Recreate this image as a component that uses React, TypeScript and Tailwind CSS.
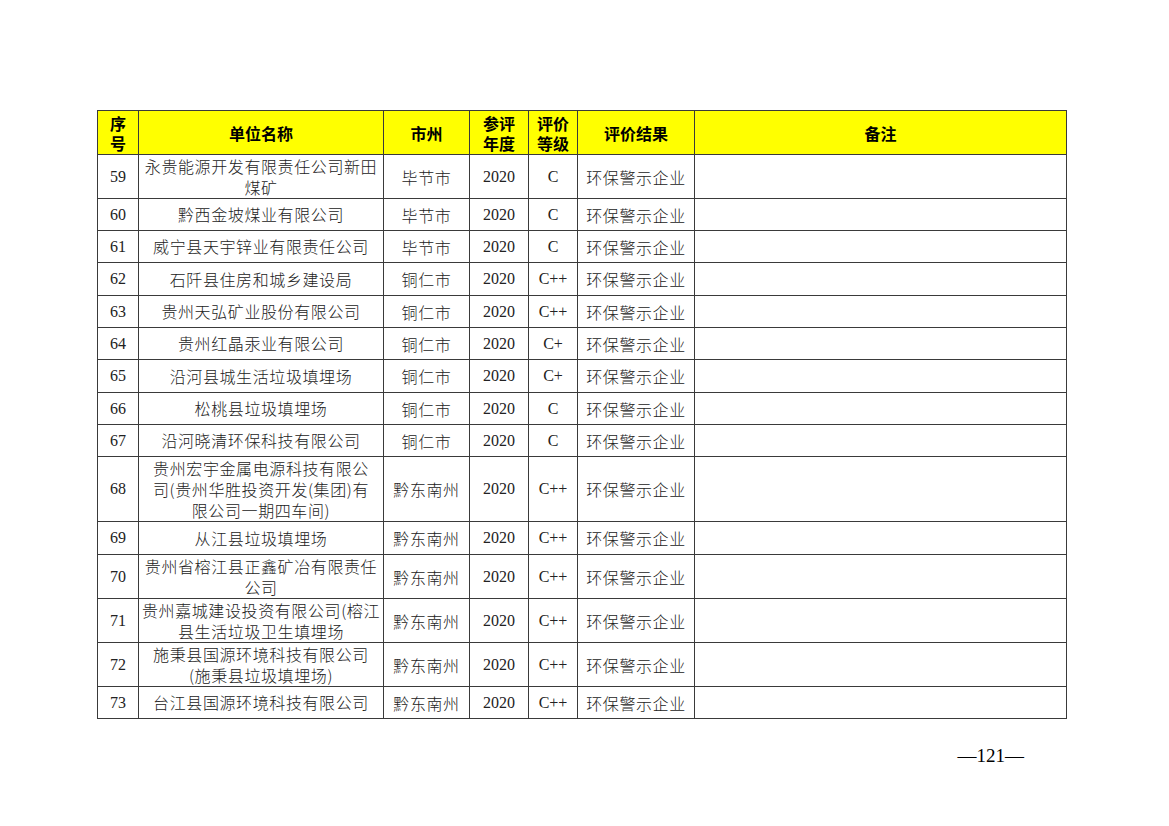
const rows: { no: number; name: string[]; city: string; grade: string; h: number }[] = [
  { no: 59, name: ['永贵能源开发有限责任公司新田', '煤矿'], city: '毕节市', grade: 'C', h: 44 },
  { no: 60, name: ['黔西金坡煤业有限公司'], city: '毕节市', grade: 'C', h: 32 },
  { no: 61, name: ['威宁县天宇锌业有限责任公司'], city: '毕节市', grade: 'C', h: 32 },
  { no: 62, name: ['石阡县住房和城乡建设局'], city: '铜仁市', grade: 'C++', h: 33 },
  { no: 63, name: ['贵州天弘矿业股份有限公司'], city: '铜仁市', grade: 'C++', h: 32 },
  { no: 64, name: ['贵州红晶汞业有限公司'], city: '铜仁市', grade: 'C+', h: 32 },
  { no: 65, name: ['沿河县城生活垃圾填埋场'], city: '铜仁市', grade: 'C+', h: 33 },
  { no: 66, name: ['松桃县垃圾填埋场'], city: '铜仁市', grade: 'C', h: 32 },
  { no: 67, name: ['沿河晓清环保科技有限公司'], city: '铜仁市', grade: 'C', h: 32 },
  { no: 68, name: ['贵州宏宇金属电源科技有限公', '司(贵州华胜投资开发(集团)有', '限公司一期四车间)'], city: '黔东南州', grade: 'C++', h: 65 },
  { no: 69, name: ['从江县垃圾填埋场'], city: '黔东南州', grade: 'C++', h: 33 },
  { no: 70, name: ['贵州省榕江县正鑫矿冶有限责任', '公司'], city: '黔东南州', grade: 'C++', h: 44 },
  { no: 71, name: ['贵州嘉城建设投资有限公司(榕江', '县生活垃圾卫生填埋场'], city: '黔东南州', grade: 'C++', h: 44 },
  { no: 72, name: ['施秉县国源环境科技有限公司', '(施秉县垃圾填埋场)'], city: '黔东南州', grade: 'C++', h: 44 },
  { no: 73, name: ['台江县国源环境科技有限公司'], city: '黔东南州', grade: 'C++', h: 32 },
]

const cell = 'border border-[#3a3a3a] p-0 text-center align-middle'
const serif = 'font-["Liberation_Serif","Noto_Sans_CJK_SC",serif]'
const cjk = 'font-["Noto_Sans_CJK_SC",sans-serif] font-light'

export default function App() {
  return (
    <div className="min-h-[826px] w-[1169px] bg-white pl-[97px] pt-[110px] text-black">
      <table className="w-[969px] table-fixed border-collapse border-[1.5px] border-[#555]">
        <colgroup>
          <col className="w-[41px]" />
          <col className="w-[245px]" />
          <col className="w-[86px]" />
          <col className="w-[59px]" />
          <col className="w-[49px]" />
          <col className="w-[117px]" />
          <col className="w-[372px]" />
        </colgroup>
        <thead>
          <tr className="h-[44px] bg-[#ffff00] font-['Noto_Sans_CJK_SC',sans-serif] text-[16px] font-bold leading-[20px]">
            <th className={cell}>序<br />号</th>
            <th className={cell}>单位名称</th>
            <th className={cell}>市州</th>
            <th className={cell}>参评<br />年度</th>
            <th className={cell}>评价<br />等级</th>
            <th className={cell}>评价结果</th>
            <th className={cell}>备注</th>
          </tr>
        </thead>
        <tbody className="text-[#222]">
          {rows.map((r) => (
            <tr key={r.no} style={{ height: r.h }}>
              <td className={`${cell} ${serif} text-[16px]`}>{r.no}</td>
              <td className={`${cell} ${cjk} text-[16px] leading-[21px] tracking-[0.6px]`}>
                {r.name.map((l, i) => <div key={i} className="whitespace-nowrap">{l}</div>)}
              </td>
              <td className={`${cell} ${cjk} text-[16px] tracking-[0.6px]`}>{r.city}</td>
              <td className={`${cell} ${serif} text-[16px]`}>2020</td>
              <td className={`${cell} ${serif} text-[16px]`}>{r.grade}</td>
              <td className={`${cell} ${cjk} text-[16px] tracking-[0.6px]`}>环保警示企业</td>
              <td className={cell}></td>
            </tr>
          ))}
        </tbody>
      </table>
      <div className="flex w-[969px] justify-end pr-[42px] pt-[23px]">
        <span className={`${serif} text-[19px]`}>—121—</span>
      </div>
    </div>
  )
}
